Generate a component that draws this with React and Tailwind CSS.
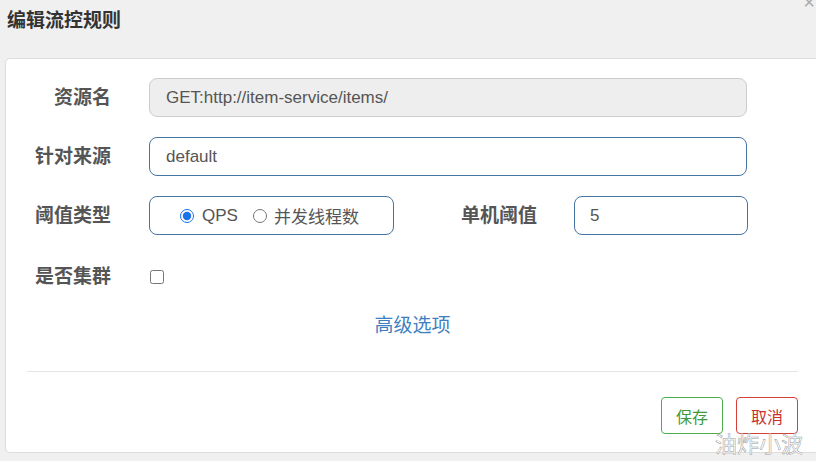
import React, { useState } from 'react';

const cjk = { fontFamily: '"Microsoft YaHei", "Noto Sans CJK SC", sans-serif' };

function Label({ children, className = '' }) {
  return (
    <div className={`text-right text-[19px] font-bold text-[#555] ${className}`}>
      {children}
    </div>
  );
}

export default function App() {
  const [source, setSource] = useState('default');
  const [grade, setGrade] = useState('qps');
  const [count, setCount] = useState('5');
  const [cluster, setCluster] = useState(false);

  return (
    <div
      className="relative w-[816px] h-[461px] overflow-hidden bg-[#f0f0f0]"
      style={{ fontFamily: '"Liberation Sans", "Noto Sans CJK SC", sans-serif' }}
    >
      {/* Header */}
      <div className="h-[58px] pl-[7px] pt-[6px]">
        <h3 className="text-[19px] font-bold text-[#333] leading-[26px]" style={cjk}>编辑流控规则</h3>
      </div>
      <span className="absolute right-[1px] top-[-8px] text-[20px] text-[#aaa] leading-none">×</span>

      {/* Body */}
      <div className="ml-[5px] mr-[-4px] h-[395px] bg-white border border-[#ddd] rounded-[5px] pt-[19px]">
        <div className="flex flex-col gap-[20px]">
          <div className="flex items-center">
            <Label className="w-[105px]"><span style={cjk}>资源名</span></Label>
            <div className="ml-[38px] w-[598px] h-[39px] flex items-center px-[16px] bg-[#eee] border border-[#ccc] rounded-[8px] text-[17px] text-[#555]">
              GET:http://item-service/items/
            </div>
          </div>

          <div className="flex items-center">
            <Label className="w-[105px]"><span style={cjk}>针对来源</span></Label>
            <input
              value={source}
              onChange={(e) => setSource(e.target.value)}
              className="ml-[38px] w-[598px] h-[39px] px-[16px] border border-[#4674a3] rounded-[8px] text-[17px] text-[#555] outline-none"
            />
          </div>

          <div className="flex items-center">
            <Label className="w-[105px]"><span style={cjk}>阈值类型</span></Label>
            <div className="ml-[38px] w-[245px] h-[39px] flex items-center justify-center gap-[15px] pr-[4px] border border-[#4674a3] rounded-[8px] text-[17px] text-[#555]">
              <label className="flex items-center gap-[8px]">
                <input
                  type="radio"
                  checked={grade === 'qps'}
                  onChange={() => setGrade('qps')}
                  className="w-[14px] h-[14px] m-0 accent-[#1a73e8]"
                />
                QPS
              </label>
              <label className="flex items-center gap-[7px]">
                <input
                  type="radio"
                  checked={grade === 'thread'}
                  onChange={() => setGrade('thread')}
                  className="w-[14px] h-[14px] m-0"
                />
                <span style={cjk}>并发线程数</span>
              </label>
            </div>
            <Label className="w-[143px]"><span style={cjk}>单机阈值</span></Label>
            <input
              value={count}
              onChange={(e) => setCount(e.target.value)}
              className="ml-[37px] w-[174px] h-[39px] px-[15px] border border-[#4674a3] rounded-[8px] text-[17px] text-[#555] outline-none"
            />
          </div>

          <div className="flex items-center h-[39px] mt-[2px]">
            <Label className="w-[105px]"><span style={cjk}>是否集群</span></Label>
            <input
              type="checkbox"
              checked={cluster}
              onChange={(e) => setCluster(e.target.checked)}
              className="ml-[39px] w-[14px] h-[14px] m-0"
            />
          </div>
        </div>

        <div className="mt-[14px] text-center">
          <a className="text-[19px] text-[#3f7fbf] cursor-pointer" style={cjk}>高级选项</a>
        </div>

        <div className="mt-[32px] mx-[21px] border-t border-[#e5e5e5]" />

        <div className="flex justify-end gap-[13px] mt-[25px] pr-[21px]">
          <button className="w-[62px] h-[37px] border border-[#4cae4c] rounded-[4px] text-[16px] text-[#3c9a3c] bg-white" style={cjk}>保存</button>
          <button className="w-[62px] h-[37px] border border-[#d43f3a] rounded-[4px] text-[16px] text-[#c9302c] bg-white" style={cjk}>取消</button>
        </div>
      </div>

      {/* Watermark */}
      <span
        className="absolute left-[715px] top-[428px] text-[22px] text-white leading-[28px]"
        style={{ ...cjk, WebkitTextStroke: '0.5px #999' }}
      >
        油炸小波
      </span>
    </div>
  );
}
